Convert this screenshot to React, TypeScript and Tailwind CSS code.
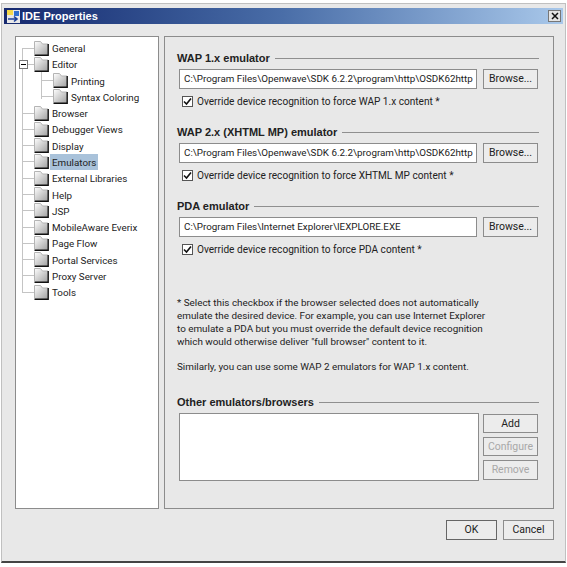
import React from "react";

const font = { fontFamily: 'Roboto, "Liberation Sans", Arial, sans-serif' };
const boldFont = { fontFamily: '"Liberation Sans", Arial, sans-serif' };

function Folder() {
  return (
    <svg width="15" height="15" viewBox="0 0 15 15" className="shrink-0">
      <defs>
        <linearGradient id="fg" x1="0" y1="0" x2="1" y2="1">
          <stop offset="0" stopColor="#ffffff" />
          <stop offset="1" stopColor="#a0a0a0" />
        </linearGradient>
      </defs>
      <path d="M0.5 4V0.5H6.5L8.5 3H14V14H0.5Z" fill="url(#fg)" />
      <path d="M0.5 13V0.5H6.5L8.5 3H14" fill="none" stroke="#b4b4b4" strokeWidth="1" />
      <path d="M14.2 3V14.2H0.5" fill="none" stroke="#111" strokeWidth="1.4" />
    </svg>
  );
}

function TreeRow({ label, child, selected, expander }: { label: string; child?: boolean; selected?: boolean; expander?: boolean }) {
  return (
    <div className={`relative flex h-[16.27px] items-center ${child ? "pl-[25px]" : "pl-[6px]"}`}>
      <div className="h-px w-[13px] shrink-0 bg-[#c4c4c4]" />
      <div className="-ml-px">
        <Folder />
      </div>
      <span className={`ml-[1px] whitespace-nowrap px-[2px] pt-px text-[9.8px] leading-[15px] text-[#222] ${selected ? "bg-[#a9c2da]" : ""}`}>{label}</span>
      {expander && (
        <div className="absolute left-[3px] top-[4px] flex h-[9px] w-[9px] items-center justify-center border border-[#777] bg-white">
          <div className="h-px w-[5px] bg-black" />
        </div>
      )}
    </div>
  );
}

function Btn({ children, disabled, className = "" }: { children: React.ReactNode; disabled?: boolean; className?: string }) {
  return (
    <div
      className={`flex items-center justify-center border border-[#8c8c8c] bg-[#ececec] text-[10.5px] ${disabled ? "text-[#a8a8a8]" : "text-[#222]"} ${className}`}
    >
      {children}
    </div>
  );
}

function Heading({ children }: { children: React.ReactNode }) {
  return (
    <div className="flex h-[14px] items-center gap-[5px] pr-[14px]">
      <span className="whitespace-nowrap text-[11px] font-bold text-[#222]" style={boldFont}>{children}</span>
      <div className="h-px flex-1 bg-[#8f8f8f]" />
    </div>
  );
}

function Emu({ title, path, check, mb }: { title: string; path: string; check: string; mb: string }) {
  return (
    <div className={mb}>
      <Heading>{title}</Heading>
      <div className="ml-[2px] mt-[4px] flex h-[20px] gap-[6px]">
        <div className="flex w-[298px] items-center overflow-hidden whitespace-nowrap border border-[#8c8c8c] bg-white pl-[4px] pt-px text-[9.8px] text-[#222]">
          {path}
        </div>
        <Btn className="w-[55px]">Browse...</Btn>
      </div>
      <div className="ml-[5px] mt-[6px] flex h-[12px] items-center gap-[4px]">
        <div className="flex h-[11px] w-[11px] items-center justify-center border border-[#555] bg-white">
          <svg width="9" height="9" viewBox="0 0 9 9">
            <path d="M1 4.5L3.5 7L8 1.5" fill="none" stroke="#111" strokeWidth="1.6" />
          </svg>
        </div>
        <span className="whitespace-nowrap pt-px text-[10.1px] text-[#222]">{check}</span>
      </div>
    </div>
  );
}

const tree: [string, boolean?, boolean?, boolean?][] = [
  ["General"],
  ["Editor", false, false, true],
  ["Printing", true],
  ["Syntax Coloring", true],
  ["Browser"],
  ["Debugger Views"],
  ["Display"],
  ["Emulators", false, true],
  ["External Libraries"],
  ["Help"],
  ["JSP"],
  ["MobileAware Everix"],
  ["Page Flow"],
  ["Portal Services"],
  ["Proxy Server"],
  ["Tools"],
];

export default function App() {
  return (
    <div className="h-[567px] w-[567px] overflow-hidden bg-white pl-[1px] pt-[3px]" style={font}>
      <div className="flex h-[560px] w-[565px] flex-col border border-b-2 border-[#c0c0c0] border-b-[#444] bg-[#e8e8e8] px-[2px] pt-[4px]">
        <div className="flex h-[16px] w-[559px] items-center justify-between bg-gradient-to-r from-[#16296f] via-[#4a6ea8] to-[#a9c8ea] pl-[2px] pr-[2px]">
          <div className="flex items-center gap-[1px]">
            <svg width="15" height="15" viewBox="0 0 15 15">
              <rect x="1" y="1" width="13" height="13" fill="#e8e8e8" />
              <rect x="1" y="1" width="6" height="5" fill="#f4d84a" />
              <rect x="8" y="2" width="5" height="5" fill="#2f6fd0" />
              <path d="M2 10H11M8 7.5L11 10L8 12.5" fill="none" stroke="#1b3f9a" strokeWidth="1.6" />
            </svg>
            <span className="text-[11px] font-bold leading-none text-white" style={boldFont}>IDE Properties</span>
          </div>
          <div className="flex h-[12px] w-[13px] items-center justify-center border border-[#777] bg-[#e4e4e4]">
            <svg width="8" height="8" viewBox="0 0 8 8">
              <path d="M1 1L7 7M7 1L1 7" stroke="#111" strokeWidth="1.5" />
            </svg>
          </div>
        </div>

        <div className="mt-[12px] flex h-[473px] gap-[5px] pl-[11px]">
          <div className="relative h-full w-[144px] border border-[#8c8c8c] bg-white pt-[3px]">
            <div className="absolute left-[6px] top-[11px] h-[245px] w-px bg-[#c4c4c4]" />
            <div className="absolute left-[25px] top-[35px] h-[27px] w-px bg-[#c4c4c4]" />
            <div className="relative">
              {tree.map(([label, child, selected, expander]) => (
                <TreeRow key={label} label={label} child={child} selected={selected} expander={expander} />
              ))}
            </div>
          </div>

          <div className="h-full w-[390px] border border-[#8c8c8c] pl-[12px] pt-[14px]">
            <Emu
              title="WAP 1.x emulator"
              path="C:\Program Files\Openwave\SDK 6.2.2\program\http\OSDK62http"
              check="Override device recognition to force WAP 1.x content *"
              mb="mb-[18px]"
            />
            <Emu
              title="WAP 2.x (XHTML MP) emulator"
              path="C:\Program Files\Openwave\SDK 6.2.2\program\http\OSDK62http"
              check="Override device recognition to force XHTML MP content *"
              mb="mb-[18px]"
            />
            <Emu
              title="PDA emulator"
              path="C:\Program Files\Internet Explorer\IEXPLORE.EXE"
              check="Override device recognition to force PDA content *"
              mb="mb-[41px]"
            />
            <div className="w-[340px] text-[9.9px] leading-[13px] text-[#222]">
              <p className="whitespace-nowrap">* Select this checkbox if the browser selected does not automatically</p>
              <p className="whitespace-nowrap">emulate the desired device. For example, you can use Internet Explorer</p>
              <p className="whitespace-nowrap">to emulate a PDA but you must override the default device recognition</p>
              <p className="whitespace-nowrap">which would otherwise deliver "full browser" content to it.</p>
              <p className="mt-[12px] whitespace-nowrap">Similarly, you can use some WAP 2 emulators for WAP 1.x content.</p>
            </div>
            <div className="mt-[22px]">
              <Heading>Other emulators/browsers</Heading>
            </div>
            <div className="ml-[2px] mt-[4px] flex gap-[4px]">
              <div className="h-[68px] w-[300px] border border-[#8c8c8c] bg-white" />
              <div className="flex flex-col gap-[4px] pt-[1px]">
                <Btn className="h-[19px] w-[55px]">Add</Btn>
                <Btn disabled className="h-[19px] w-[55px]">Configure</Btn>
                <Btn disabled className="h-[20px] w-[55px]">Remove</Btn>
              </div>
            </div>
          </div>
        </div>

        <div className="mt-[11px] flex justify-end gap-[6px] pr-[9px]">
          <Btn className="h-[20px] w-[51px] border-[#666]">OK</Btn>
          <Btn className="h-[20px] w-[51px]">Cancel</Btn>
        </div>
      </div>
    </div>
  );
}
